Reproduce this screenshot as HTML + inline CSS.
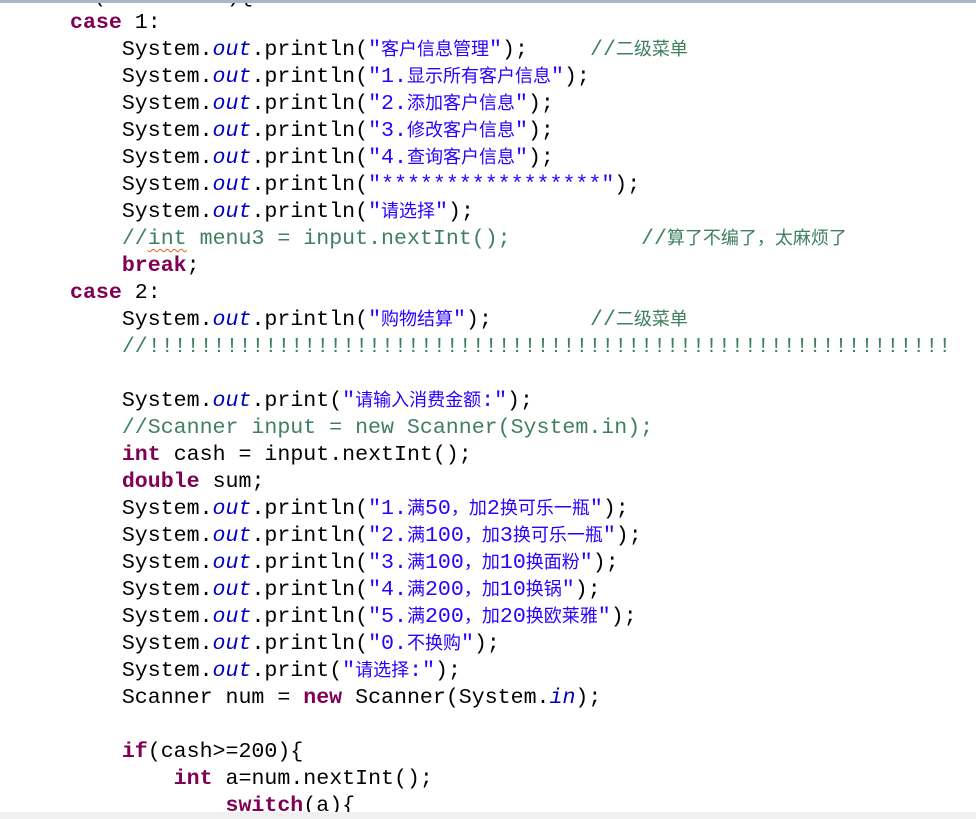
<!DOCTYPE html>
<html><head><meta charset="utf-8"><style>
html,body{margin:0;padding:0;background:#fff;width:976px;height:819px;overflow:hidden;position:relative}
.l,.cm{position:absolute;height:27px;line-height:27px;white-space:pre;font-family:"Liberation Mono","Noto Sans CJK SC",monospace;font-size:21.6px;color:#000}
.l{left:70px}
.cm{color:#3f7f5f}
.k{color:#7f0055;font-weight:bold}
.i{color:#0000c0;font-style:italic}
.s{color:#2a00ff}
.c{color:#3f7f5f}
.z{font-family:"Noto Sans CJK SC",sans-serif;font-size:18px;line-height:1px}
.sq{text-decoration:underline wavy #e06020;text-decoration-thickness:1px;text-underline-offset:4px}
</style></head><body>
<div class="l" style="top:-16px;left:93px">(</div>
<div class="l" style="top:-16px;left:227px">){</div>
<div style="position:absolute;left:0;top:0;width:976px;height:3px;background:#a8b8c8"></div>

<div class="l" style="top:10px"><span class="k">case</span> 1:</div>
<div class="l" style="top:37px">    System.<span class="i">out</span>.println(<span class="s">"<span class="z">客户信息管理</span>"</span>);</div>
<div class="cm" style="top:37px;left:590px">//<span class="z">二级菜单</span></div>
<div class="l" style="top:64px">    System.<span class="i">out</span>.println(<span class="s">"1.<span class="z">显示所有客户信息</span>"</span>);</div>
<div class="l" style="top:91px">    System.<span class="i">out</span>.println(<span class="s">"2.<span class="z">添加客户信息</span>"</span>);</div>
<div class="l" style="top:118px">    System.<span class="i">out</span>.println(<span class="s">"3.<span class="z">修改客户信息</span>"</span>);</div>
<div class="l" style="top:145px">    System.<span class="i">out</span>.println(<span class="s">"4.<span class="z">查询客户信息</span>"</span>);</div>
<div class="l" style="top:172px">    System.<span class="i">out</span>.println(<span class="s">"*****************"</span>);</div>
<div class="l" style="top:199px">    System.<span class="i">out</span>.println(<span class="s">"<span class="z">请选择</span>"</span>);</div>
<div class="l" style="top:226px">    <span class="c">//<span class="sq">int</span> menu3 = input.nextInt();</span></div>
<div class="cm" style="top:226px;left:641px">//<span class="z">算了不编了，太麻烦了</span></div>
<div class="l" style="top:253px">    <span class="k">break</span>;</div>
<div class="l" style="top:280px"><span class="k">case</span> 2:</div>
<div class="l" style="top:307px">    System.<span class="i">out</span>.println(<span class="s">"<span class="z">购物结算</span>"</span>);</div>
<div class="cm" style="top:307px;left:590px">//<span class="z">二级菜单</span></div>
<div class="l" style="top:334px">    <span class="c">//!!!!!!!!!!!!!!!!!!!!!!!!!!!!!!!!!!!!!!!!!!!!!!!!!!!!!!!!!!!!!!</span></div>
<div class="l" style="top:388px">    System.<span class="i">out</span>.print(<span class="s">"<span class="z">请输入消费金额</span>:"</span>);</div>
<div class="l" style="top:415px">    <span class="c">//Scanner input = new Scanner(System.in);</span></div>
<div class="l" style="top:442px">    <span class="k">int</span> cash = input.nextInt();</div>
<div class="l" style="top:469px">    <span class="k">double</span> sum;</div>
<div class="l" style="top:496px">    System.<span class="i">out</span>.println(<span class="s">"1.<span class="z">满</span>50<span class="z">，加</span>2<span class="z">换可乐一瓶</span>"</span>);</div>
<div class="l" style="top:523px">    System.<span class="i">out</span>.println(<span class="s">"2.<span class="z">满</span>100<span class="z">，加</span>3<span class="z">换可乐一瓶</span>"</span>);</div>
<div class="l" style="top:550px">    System.<span class="i">out</span>.println(<span class="s">"3.<span class="z">满</span>100<span class="z">，加</span>10<span class="z">换面粉</span>"</span>);</div>
<div class="l" style="top:577px">    System.<span class="i">out</span>.println(<span class="s">"4.<span class="z">满</span>200<span class="z">，加</span>10<span class="z">换锅</span>"</span>);</div>
<div class="l" style="top:604px">    System.<span class="i">out</span>.println(<span class="s">"5.<span class="z">满</span>200<span class="z">，加</span>20<span class="z">换欧莱雅</span>"</span>);</div>
<div class="l" style="top:631px">    System.<span class="i">out</span>.println(<span class="s">"0.<span class="z">不换购</span>"</span>);</div>
<div class="l" style="top:658px">    System.<span class="i">out</span>.print(<span class="s">"<span class="z">请选择</span>:"</span>);</div>
<div class="l" style="top:685px">    Scanner num = <span class="k">new</span> Scanner(System.<span class="i">in</span>);</div>
<div class="l" style="top:739px">    <span class="k">if</span>(cash&gt;=200){</div>
<div class="l" style="top:766px">        <span class="k">int</span> a=num.nextInt();</div>
<div class="l" style="top:793px">            <span class="k">switch</span>(a){</div>
<div style="position:absolute;left:0;top:812px;width:976px;height:7px;background:#f0f0f0"></div>
</body></html>
